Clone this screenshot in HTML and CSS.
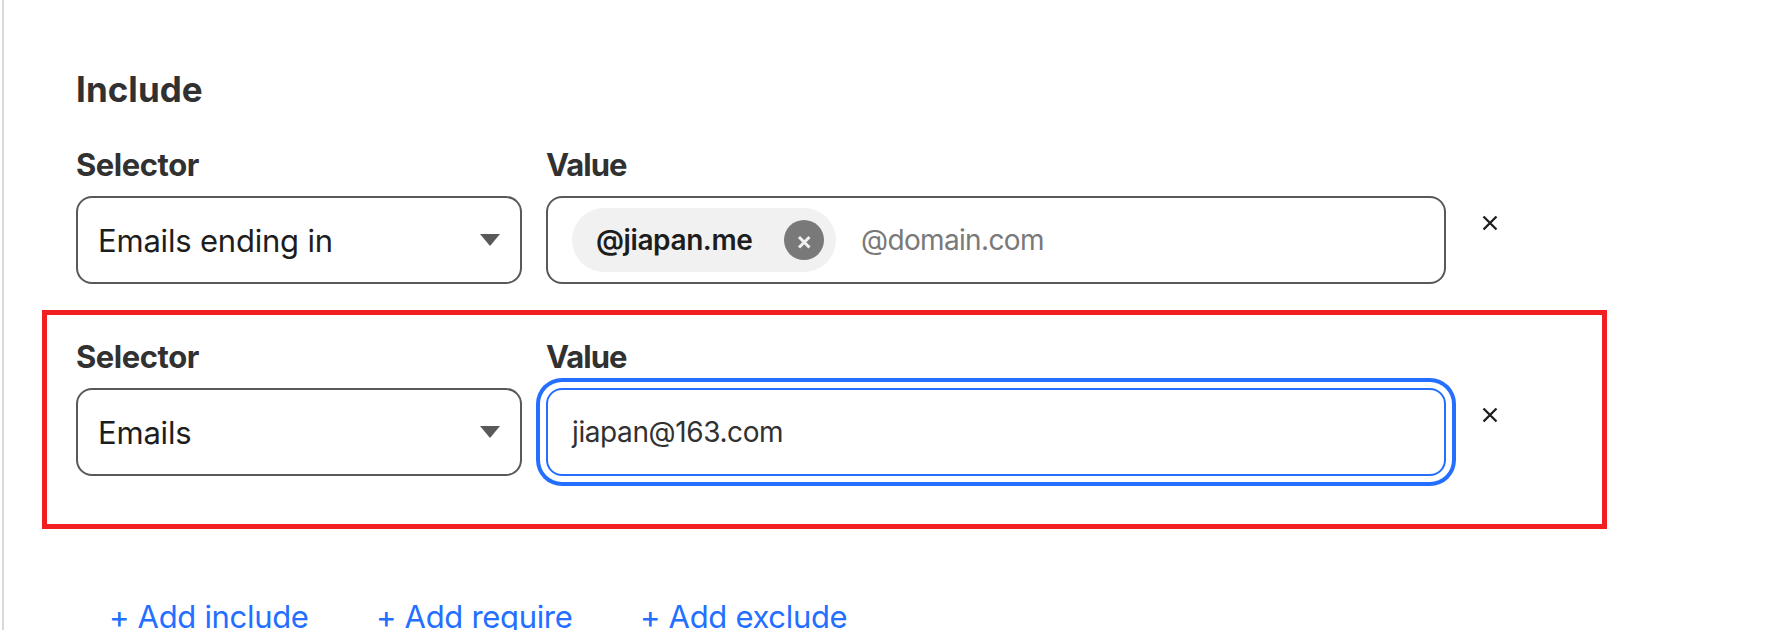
FILE: index.html
```html
<!DOCTYPE html>
<html lang="en">
<head>
<meta charset="utf-8">
<title>Access rules</title>
<link rel="stylesheet" href="styles.css">
</head>
<body>
<main class="panel">
  <h2 class="heading"><span>Include</span></h2>
  <section class="rule">
    <div class="field field-selector">
      <label class="label label-selector"><span>Selector</span></label>
      <div class="control select"><span class="select-long">Emails ending in</span>
        <svg class="caret" width="20" height="12" viewBox="0 0 20 12"><path d="M0 0h20L10 12z" fill="#595959"/></svg>
      </div>
    </div>
    <div class="field field-value">
      <label class="label label-value"><span>Value</span></label>
      <div class="control value">
        <div class="chip"><span class="chip-text">@jiapan.me</span>
          <span class="chip-remove"><svg width="40" height="40" viewBox="0 0 40 40"><path d="M15 17l10.500 10.500M25.500 17L15 27.500" stroke="#f1f1f1" stroke-width="3" fill="none"/></svg></span>
        </div>
        <span class="placeholder">@domain.com</span>
      </div>
    </div>
    <svg class="close" width="16" height="16" viewBox="0 0 16 16"><path d="M1.500 1.500l13 13M14.500 1.500l-13 13" stroke="#1d1d1d" stroke-width="2.300" fill="none"/></svg>
  </section>
  <section class="rule">
    <div class="field field-selector">
      <label class="label label-selector"><span>Selector</span></label>
      <div class="control select"><span class="select-short">Emails</span>
        <svg class="caret" width="20" height="12" viewBox="0 0 20 12"><path d="M0 0h20L10 12z" fill="#595959"/></svg>
      </div>
    </div>
    <div class="field field-value">
      <label class="label label-value"><span>Value</span></label>
      <div class="control value focused"><span class="email">jiapan@163.com</span></div>
    </div>
    <svg class="close" width="16" height="16" viewBox="0 0 16 16"><path d="M1.500 1.500l13 13M14.500 1.500l-13 13" stroke="#1d1d1d" stroke-width="2.300" fill="none"/></svg>
  </section>
  <nav class="actions">
    <a class="add-include">+ Add include</a>
    <a class="add-require">+ Add require</a>
    <a class="add-exclude">+ Add exclude</a>
  </nav>
  <div class="highlight"></div>
</main>
</body>
</html>
```
FILE: styles.css
```css
* { box-sizing: border-box; }
body { margin: 0; background: #fff; font-family: Inter, "Liberation Sans", sans-serif; color: #1d1d1d; overflow: hidden; }
.panel { position: relative; margin-left: 2px; height: 630px; border-left: 2px solid #d9d9d9; padding: 66px 0 0 72px; overflow: hidden; white-space: nowrap; }
.heading { margin: 0; height: 78px; font-size: 35px; line-height: 46px; font-weight: 700; color: #313131; letter-spacing: 0.05px; }
.rule { display: flex; height: 192px; }
.field { display: flex; flex-direction: column; }
.field-selector { width: 446px; margin-right: 24px; }
.field-value { width: 900px; }
.label { height: 52px; line-height: 41px; font-size: 31px; font-weight: 700; color: #313131; letter-spacing: -0.45px; }
.label-value { letter-spacing: -1px; }
.control { display: flex; align-items: center; height: 88px; border: 2px solid #595959; border-radius: 16px; background: #fff; }
.select { justify-content: space-between; padding: 0 20px 0 20px; font-size: 31px; letter-spacing: -0.2px; }
.caret { display: block; }
.value { padding: 0 24px; font-size: 28px; }
.chip { display: flex; align-items: center; justify-content: space-between; width: 264px; height: 64px; padding: 0 12px 0 24px; border-radius: 32px; background: #f1f1f1; font-weight: 600; letter-spacing: -0.4px; }
.chip-remove { width: 40px; height: 40px; border-radius: 50%; background: #797979; }
.chip-remove svg { display: block; }
.placeholder { margin-left: 25px; color: #797979; letter-spacing: -0.65px; }
.focused { border-color: #246fff; box-shadow: 0 0 0 6px #fff, 0 0 0 10px #246fff; }
.email { color: #313131; letter-spacing: -0.4px; }
.close { margin: 71px 0 0 36px; }
.actions { display: flex; margin-top: 67px; padding-left: 33px; font-size: 31px; line-height: 44px; color: #246fff; letter-spacing: -0.32px; }
.add-include { width: 267px; }
.add-require { width: 264px; }
.highlight { position: absolute; left: 38px; top: 310px; width: 1565px; height: 219px; border: 5px solid #f11e22; }
```
